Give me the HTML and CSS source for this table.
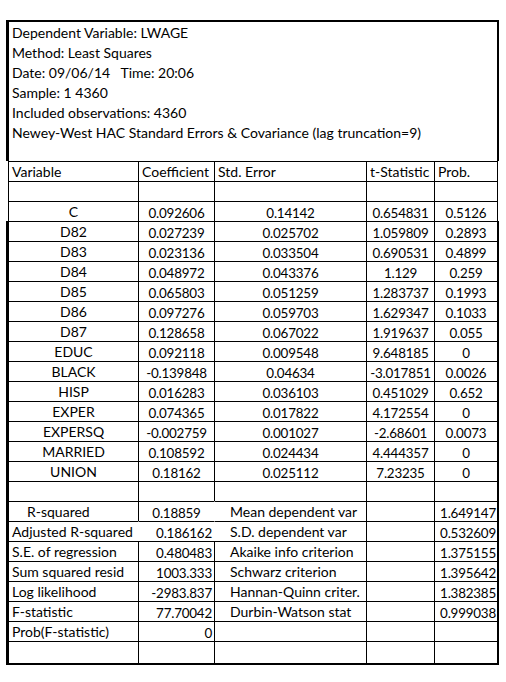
FILE: index.html
```html
<!DOCTYPE html>
<html lang="en">
<head>
  <meta charset="UTF-8">
  <title>LWAGE regression output</title>
  <link rel="stylesheet" href="styles.css">
</head>
<body>
  <div class="sheet">
    <div class="head">
      <div>Dependent Variable: LWAGE</div>
      <div>Method: Least Squares</div>
      <div>Date: 09/06/14&nbsp;&nbsp; Time: 20:06</div>
      <div>Sample: 1 4360</div>
      <div>Included observations: 4360</div>
      <div>Newey-West HAC Standard Errors &amp; Covariance (lag truncation=9)</div>
    </div>

    <div class="row">
      <div>Variable</div><div>Coefficient</div><div>Std. Error</div><div>t-Statistic</div><div>Prob.</div>
    </div>
    <div class="row"><div></div><div></div><div></div><div></div><div></div></div>

    <div class="row c"><div>C</div><div>0.092606</div><div>0.14142</div><div>0.654831</div><div>0.5126</div></div>
    <div class="row c thick"><div>D82</div><div>0.027239</div><div>0.025702</div><div>1.059809</div><div>0.2893</div></div>
    <div class="row c thick"><div>D83</div><div>0.023136</div><div>0.033504</div><div>0.690531</div><div>0.4899</div></div>
    <div class="row c thick"><div>D84</div><div>0.048972</div><div>0.043376</div><div>1.129</div><div>0.259</div></div>
    <div class="row c thick"><div>D85</div><div>0.065803</div><div>0.051259</div><div>1.283737</div><div>0.1993</div></div>
    <div class="row c thick"><div>D86</div><div>0.097276</div><div>0.059703</div><div>1.629347</div><div>0.1033</div></div>
    <div class="row c thick"><div>D87</div><div>0.128658</div><div>0.067022</div><div>1.919637</div><div>0.055</div></div>
    <div class="row c thick"><div>EDUC</div><div>0.092118</div><div>0.009548</div><div>9.648185</div><div>0</div></div>
    <div class="row c thick"><div>BLACK</div><div>-0.139848</div><div>0.04634</div><div>-3.017851</div><div>0.0026</div></div>
    <div class="row c thick"><div>HISP</div><div>0.016283</div><div>0.036103</div><div>0.451029</div><div>0.652</div></div>
    <div class="row c thick"><div>EXPER</div><div>0.074365</div><div>0.017822</div><div>4.172554</div><div>0</div></div>
    <div class="row c thick"><div>EXPERSQ</div><div>-0.002759</div><div>0.001027</div><div>-2.68601</div><div>0.0073</div></div>
    <div class="row c thick"><div>MARRIED</div><div>0.108592</div><div>0.024434</div><div>4.444357</div><div>0</div></div>
    <div class="row c thick"><div>UNION</div><div>0.18162</div><div>0.025112</div><div>7.23235</div><div>0</div></div>
    <div class="row thick"><div></div><div></div><div></div><div></div><div></div></div>

    <!-- summary statistics -->
    <div class="row stats thick">
      <div class="indent">R-squared</div><div class="mid">0.18859</div><div class="label nb">Mean dependent var</div><div></div><div>1.649147</div>
    </div>
    <div class="row stats thick">
      <div>Adjusted R-squared</div><div class="nb">0.186162</div><div class="label nb">S.D. dependent var</div><div></div><div>0.532609</div>
    </div>
    <div class="row stats thick">
      <div>S.E. of regression</div><div>0.480483</div><div class="label">Akaike info criterion</div><div></div><div>1.375155</div>
    </div>
    <div class="row stats thick">
      <div>Sum squared resid</div><div>1003.333</div><div class="label">Schwarz criterion</div><div></div><div>1.395642</div>
    </div>
    <div class="row stats thick">
      <div>Log likelihood</div><div>-2983.837</div><div class="label">Hannan-Quinn criter.</div><div></div><div>1.382385</div>
    </div>
    <div class="row stats thick">
      <div>F-statistic</div><div>77.70042</div><div class="label">Durbin-Watson stat</div><div></div><div>0.999038</div>
    </div>
    <div class="row stats thick">
      <div>Prob(F-statistic)</div><div>0</div><div></div><div></div><div></div>
    </div>
    <div class="row thick last"><div></div><div></div><div></div><div></div><div></div></div>
  </div>
</body>
</html>
```

FILE: styles.css
```css
* { box-sizing: border-box; margin: 0; padding: 0; }
body { font-family: Lato, "Liberation Sans", sans-serif; font-size: 14px; color: #000; background: #fff; padding: 20px 0 0 8px; }
.sheet { width: 490px; }

.head { height: 141px; border: 1px solid #000; border-top-width: 2px; border-bottom: 0; box-shadow: -2px 0 0 #000, 1px 0 0 #000; padding: 1px 0 0 3px; line-height: 20px; white-space: nowrap; }

.row { display: grid; grid-template-columns: 130px 76px 152px 68px 63px; grid-template-rows: 20px; border-right: 1px solid #000; }
.row > div { border-left: 1px solid #000; border-top: 1px solid #000; line-height: 20px; padding: 0 3px; white-space: nowrap; }
.row.thick { box-shadow: -2px 0 0 #000, 1px 0 0 #000; }
.row.last { border-bottom: 2px solid #000; grid-template-rows: 22px; }

.row.c > div { text-align: center; padding: 0; }

/* numbers: Calibri figures are narrower than Lato's */
.row.c > div:not(:first-child),
.stats > div:nth-child(2),
.stats > div:nth-child(5) { font-size: 13.4px; letter-spacing: -0.2px; padding-top: 1px; }

.stats > div:nth-child(2), .stats > div:nth-child(5) { text-align: right; padding-right: 2px; }
.stats > div:nth-child(5) { padding-right: 1px; }
.stats > div.mid { text-align: center; padding-right: 0; padding-left: 0; }
.stats .label { padding-left: 15px; }
.stats .indent { padding-left: 18px; }
.row > .nb { border-left-color: transparent; }
```
